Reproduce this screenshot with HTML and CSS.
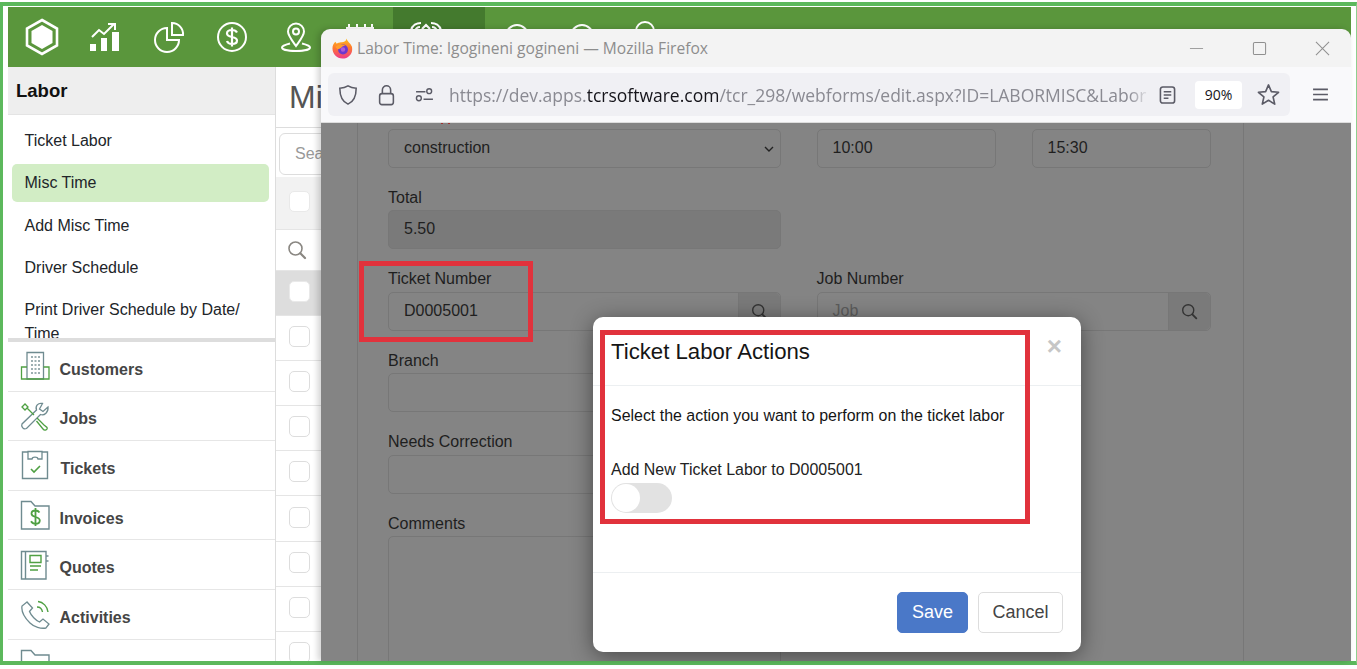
FILE: index.html
```html
<!DOCTYPE html>
<html lang="en">
<head>
<meta charset="utf-8">
<title>Labor Time</title>
<link rel="stylesheet" href="styles.css">
</head>
<body>
<svg class="defs" width="0" height="0" aria-hidden="true">
  <symbol id="mag" viewBox="0 0 20 20"><circle cx="8.500" cy="8.500" r="6.500" fill="none" stroke="currentColor" stroke-width="1.600"/><path d="M13.300 13.300 18 18" stroke="currentColor" stroke-width="2.200" stroke-linecap="round"/></symbol>
</svg>
<div class="stage">
  <div class="frame">
    <header class="topbar">
      <svg class="top-ico logo" viewBox="0 0 36 38"><path d="M18 2 33 10.500V27.500L18 36 3 27.500V10.500Z" fill="none" stroke="#fff" stroke-width="2.600"/><path d="M18 7 28.500 13V25L18 31 7.500 25V13Z" fill="#fff"/></svg>
      <svg class="top-ico" viewBox="0 0 32 32"><path d="M1 30V23H7V30ZM12 30V17H18V30ZM23 30V11H30V30Z" fill="#fff"/><path d="M3 16 10 9 15 13 25 3M19 3H26V9" fill="none" stroke="#fff" stroke-width="2"/></svg>
      <svg class="top-ico" viewBox="0 0 32 32"><path d="M14 7A12 12 0 1 0 26 19H14Z" fill="none" stroke="#fff" stroke-width="2"/><path d="M19 2A11 11 0 0 1 30 14H19Z" fill="none" stroke="#fff" stroke-width="2"/></svg>
      <svg class="top-ico" viewBox="0 0 32 32"><circle cx="16" cy="16" r="14" fill="none" stroke="#fff" stroke-width="2"/><path d="M21 11.500C20 9.500 18 9 16 9 13 9 11 10.500 11 12.500 11 17.500 21 14.500 21 19.500 21 21.800 19 23 16 23 13.500 23 11.700 22 11 20M16 6.500V25.500" fill="none" stroke="#fff" stroke-width="2.200"/></svg>
      <svg class="top-ico" viewBox="0 0 32 32"><path d="M16 25C11 18 8 14.500 8 10.500A8 8 0 0 1 24 10.500C24 14.500 21 18 16 25Z" fill="none" stroke="#fff" stroke-width="2"/><circle cx="16" cy="10.500" r="3" fill="none" stroke="#fff" stroke-width="2"/><path d="M10 22.500C4 24 2 25 2 26.500 2 28.700 8 30 16 30S30 28.700 30 26.500C30 25 28 24 22 22.500" fill="none" stroke="#fff" stroke-width="2"/></svg>
      <svg class="top-ico cal" viewBox="0 0 32 32"><path d="M2 6H30M2 14H30M5 2V30M13 2V30M21 2V30M28 2V30" fill="none" stroke="#fff" stroke-width="2"/></svg>
      <div class="top-active"><svg class="top-ico" viewBox="0 0 32 32"><path d="M1 11C2 5 7 3 11 3M5 11C6 8 8 7 10 7M21 3C25 3 30 5 31 11M22 7C24 7 26 8 27 11M12 9 16 5 20 9" fill="none" stroke="#fff" stroke-width="2.200"/></svg></div>
      <svg class="top-ico t-a" viewBox="0 0 32 32"><circle cx="16" cy="16" r="11" fill="none" stroke="#fff" stroke-width="2"/></svg>
      <svg class="top-ico t-b" viewBox="0 0 32 32"><circle cx="16" cy="16" r="11" fill="none" stroke="#fff" stroke-width="2"/></svg>
      <svg class="top-ico t-c" viewBox="0 0 32 32"><circle cx="16" cy="12" r="9" fill="none" stroke="#fff" stroke-width="2"/></svg>
    </header>
    <div class="workspace">
      <aside class="sidebar">
        <h2 class="side-title">Labor</h2>
        <nav class="side-menu">
          <a class="side-link">Ticket Labor</a>
          <a class="side-link active">Misc Time</a>
          <a class="side-link">Add Misc Time</a>
          <a class="side-link">Driver Schedule</a>
          <a class="side-link">Print Driver Schedule by Date/ Time</a>
        </nav>
        <ul class="modules">
          <li class="module">
            <svg class="mod-ico" viewBox="0 0 30 30"><path d="M7 28V1.500H23.500V28Z" fill="none" stroke="#6f8b90" stroke-width="1.300"/><path d="M7 16H1.500V28H29V16H23.500M1.500 28H29" fill="none" stroke="#4fa043" stroke-width="1.300"/><path d="M11 6H13M14.500 6H16.500M18 6H20M11 10H13M14.500 10H16.500M18 10H20M11 14H13M14.500 14H16.500M18 14H20M11 18H13M14.500 18H16.500M18 18H20M11 22H13M14.500 22H16.500M18 22H20" stroke="#7d9599" stroke-width="1.400"/></svg>
            <span class="mod-text">Customers</span>
          </li>
          <li class="module">
            <svg class="mod-ico" viewBox="0 0 30 30"><path d="M28 6 23 10.500 19.500 8 22.500 2.500C18 1.500 15 5 16.500 9L2 23C1 25 3 29 6.500 27.500L20.500 13.500C24.500 15 28.500 11 28 6Z" fill="none" stroke="#6f8b90" stroke-width="1.300"/><path d="M2 6 5 3 8 6 5 9ZM7.500 7.500 14 14M17 17 24 24 27 26.500C28 29 24.500 30 23 28L16.500 20" fill="none" stroke="#4fa043" stroke-width="1.300"/></svg>
            <span class="mod-text">Jobs</span>
          </li>
          <li class="module">
            <svg class="mod-ico" viewBox="0 0 30 30"><path d="M8 2H2.500V28.500H27.500V2H22" fill="none" stroke="#6f8b90" stroke-width="1.400"/><path d="M8 1.500H22V9H18C17.500 6.500 12.500 6.500 12 9H8Z" fill="none" stroke="#6f8b90" stroke-width="1.300"/><path d="M11 19 14 22 20 16" fill="none" stroke="#4fa043" stroke-width="1.600"/></svg>
            <span class="mod-text nudge">Tickets</span>
          </li>
          <li class="module">
            <svg class="mod-ico" viewBox="0 0 30 30"><path d="M1.500 1.500H11L15 6H29V29H1.500Z" fill="none" stroke="#6f8b90" stroke-width="1.400"/><path d="M19.500 12.500C18.500 11 17 10.500 15.500 10.500 13 10.500 11.500 12 11.500 13.800 11.500 18 19.800 16 19.800 20.500 19.800 22.500 18 23.800 15.500 23.800 13.500 23.800 12 23 11 21.300M15.500 8V26" fill="none" stroke="#4fa043" stroke-width="1.800"/></svg>
            <span class="mod-text">Invoices</span>
          </li>
          <li class="module">
            <svg class="mod-ico" viewBox="0 0 30 30"><path d="M1.500 1.500H26V29H1.500ZM5.500 1.500V29M26 6H28.500M26 11H28.500" fill="none" stroke="#6f8b90" stroke-width="1.400"/><path d="M10 5.500H21V12.500H10ZM10 16H21M10 20H18" fill="none" stroke="#4fa043" stroke-width="1.400"/></svg>
            <span class="mod-text">Quotes</span>
          </li>
          <li class="module">
            <svg class="mod-ico" viewBox="0 0 30 30"><path d="M7 3 2 7C1 13 6 20 10 24S21 30 26 29L29 25 23 20 19.500 23C16 21.500 11 16.500 9.500 12.500L12.500 9Z" fill="none" stroke="#6f8b90" stroke-width="1.300"/><path d="M17 8C20 8 22 10 22.500 13M18 2.500C23 3 27.500 7.500 28 13" fill="none" stroke="#4fa043" stroke-width="1.400"/></svg>
            <span class="mod-text">Activities</span>
          </li>
          <li class="module">
            <svg class="mod-ico" viewBox="0 0 30 30"><path d="M1.500 1.500H11L15 6H29V29H1.500Z" fill="none" stroke="#6f8b90" stroke-width="1.400"/></svg>
          </li>
        </ul>
      </aside>
      <section class="listing">
        <h1 class="list-title">Misc</h1>
        <div class="list-search"><div class="search-box">Search</div></div>
        <div class="row head"><span class="check"></span></div>
        <div class="row filter"><svg class="filter-ico"><use href="#mag"/></svg></div>
        <div class="row picked"><span class="check"></span></div>
        <div class="row"><span class="check"></span></div>
        <div class="row"><span class="check"></span></div>
        <div class="row"><span class="check"></span></div>
        <div class="row"><span class="check"></span></div>
        <div class="row"><span class="check"></span></div>
        <div class="row"><span class="check"></span></div>
        <div class="row"><span class="check"></span></div>
        <div class="row"><span class="check"></span></div>
      </section>
    </div>
  </div>

  <div class="window">
    <div class="titlebar">
      <svg class="ff" viewBox="0 0 22 22"><defs><linearGradient id="ffg" x1="0.500" y1="0" x2="0.500" y2="1"><stop offset="0" stop-color="#ffc21f"/><stop offset="0.450" stop-color="#ff7a2c"/><stop offset="1" stop-color="#ee3a8c"/></linearGradient></defs><path d="M15 0.500C16 3.500 19.500 5.500 20.800 9 22.500 15.500 17.800 21.500 11 21.500 5 21.500 0.500 16.500 0.500 11 0.500 8 1.500 6 3.500 4L5 6C7.500 4 11.500 5 13.500 3.500 14.700 2.800 15 1.500 15 0.500Z" fill="url(#ffg)"/><circle cx="11.500" cy="12" r="5.200" fill="#6d38cf"/><circle cx="11.500" cy="12" r="2.300" fill="#b05bd8"/><path d="M3.500 9.500C5.500 6.500 11 6 14 8 11.500 8 10 9 9.500 10.500L6 12Z" fill="#ff9d2b"/></svg>
      <span class="win-title">Labor Time: lgogineni gogineni — Mozilla Firefox</span>
      <div class="win-ctrls">
        <svg class="ctrl" viewBox="0 0 16 16"><path d="M1 8H15" stroke="#9a9a9a" stroke-width="1"/></svg>
        <svg class="ctrl" viewBox="0 0 16 16"><rect x="1.500" y="1.500" width="13" height="13" rx="1.500" fill="none" stroke="#8f8f8f" stroke-width="1.100"/></svg>
        <svg class="ctrl" viewBox="0 0 16 16"><path d="M1 1 15 15M15 1 1 15" stroke="#8f8f8f" stroke-width="1.100"/></svg>
      </div>
    </div>
    <div class="toolbar">
      <div class="urlbar">
        <svg class="tb-ico shield" viewBox="0 0 22 24"><path d="M11 2C8 4 5 4.500 2 4.500 2 13 4 19 11 22 18 19 20 13 20 4.500 17 4.500 14 4 11 2Z" fill="none" stroke="#5b5b66" stroke-width="1.700"/></svg>
        <svg class="tb-ico lock" viewBox="0 0 18 24"><rect x="1.500" y="10.500" width="15" height="12" rx="2.500" fill="none" stroke="#5b5b66" stroke-width="1.700"/><path d="M4.500 10.500V6.500A4.500 4.500 0 0 1 13.500 6.500V10.500" fill="none" stroke="#5b5b66" stroke-width="1.700"/></svg>
        <svg class="tb-ico sliders" viewBox="0 0 20 16"><path d="M1 5H11M9 13H19" stroke="#5b5b66" stroke-width="1.600"/><circle cx="15" cy="4.500" r="2.600" fill="none" stroke="#5b5b66" stroke-width="1.500"/><circle cx="4" cy="12" r="2.600" fill="none" stroke="#5b5b66" stroke-width="1.500"/></svg>
        <div class="url"><span class="dim">https://dev.apps.</span>tcrsoftware.com<span class="dim">/tcr_298/webforms/edit.aspx?ID=LABORMISC&amp;Labor</span></div>
        <svg class="tb-ico reader" viewBox="0 0 18 20"><rect x="1.500" y="1.500" width="15" height="17" rx="2.500" fill="none" stroke="#5b5b66" stroke-width="1.700"/><path d="M5 6.500H13M5 10H13M5 13.500H10" stroke="#5b5b66" stroke-width="1.500"/></svg>
        <span class="zoom-pill">90%</span>
        <svg class="tb-ico star" viewBox="0 0 24 24"><path d="M12 2 15 9 22.500 9.700 16.800 14.600 18.500 22 12 18 5.500 22 7.200 14.600 1.500 9.700 9 9Z" fill="none" stroke="#5b5b66" stroke-width="1.700" stroke-linejoin="round"/></svg>
      </div>
      <svg class="tb-ico burger" viewBox="0 0 18 14"><path d="M1 1.500H17M1 7H17M1 12.500H17" stroke="#5b5b66" stroke-width="1.700"/></svg>
    </div>
    <div class="page">
      <span class="cut-mark"></span>
      <div class="panel">
        <div class="form">
          <div class="field"><div class="ctl select">construction<svg class="chev" viewBox="0 0 10 6"><path d="M1 1 5 5 9 1" fill="none" stroke="#222" stroke-width="1.400"/></svg></div></div>
          <div class="field"><div class="ctl">10:00</div></div>
          <div class="field"><div class="ctl">15:30</div></div>
          <div class="field c1"><label class="lbl">Total</label><div class="ctl ro">5.50</div></div>
          <div class="field c1"><label class="lbl">Ticket Number</label><div class="ctl grp"><span class="grp-val">D0005001</span><span class="grp-btn"><svg class="grp-ico"><use href="#mag"/></svg></span></div></div>
          <div class="field c23"><label class="lbl">Job Number</label><div class="ctl grp"><span class="grp-val ph">Job</span><span class="grp-btn"><svg class="grp-ico"><use href="#mag"/></svg></span></div></div>
          <div class="field c1"><label class="lbl">Branch</label><div class="ctl"></div></div>
          <div class="field c1"><label class="lbl">Needs Correction</label><div class="ctl"></div></div>
          <div class="field c1"><label class="lbl">Comments</label><div class="ctl area"></div></div>
        </div>
      </div>
    </div>
    <div class="mark mark-ticket"></div>
    <div class="modal">
      <div class="modal-head"><h3 class="modal-title">Ticket Labor Actions</h3><span class="modal-x">×</span></div>
      <div class="modal-body">
        <p class="modal-text">Select the action you want to perform on the ticket labor</p>
        <p class="modal-sub">Add New Ticket Labor to D0005001</p>
        <span class="toggle"><span class="knob"></span></span>
      </div>
      <div class="modal-foot"><button class="btn save">Save</button><button class="btn cancel">Cancel</button></div>
      <div class="mark mark-modal"></div>
    </div>
  </div>
</div>
</body>
</html>
```
FILE: styles.css
```css
* { box-sizing: border-box; }
html, body { margin: 0; padding: 0; background: #fff; overflow: hidden; }
body { font-family: "Liberation Sans", Arial, sans-serif; color: #212529; }
.defs { position: absolute; }
.stage { position: relative; width: 1357px; height: 669px; overflow: hidden; background: #fff; }
.frame {
  margin-top: 2px; width: 1357px; height: 663px;
  border-top: 4.500px solid #5cb85c; border-bottom: 4px solid #5cb85c;
  border-left: 3px solid #5cb85c; border-right: 1px solid #8fd08f;
  padding: 1px 5px 0 5px; overflow: hidden;
  display: flex; flex-direction: column;
}

.topbar { height: 60px; flex: none; background: #5a963c; display: flex; align-items: center; padding-left: 15.500px; position: relative; }
.top-ico { width: 32px; height: 32px; flex: none; margin-right: 31.700px; }
.logo { width: 36px; height: 38px; margin-right: 29.500px; }
.cal { position: relative; top: 1px; }
.top-active { position: absolute; left: 385px; top: 0; width: 92px; height: 60px; background: #447a2e; padding: 13px 0 0 17px; }
.t-a, .t-b, .t-c { position: absolute; margin: 0; }
.t-a { left: 492.500px; top: 13px; } .t-b { left: 557.500px; top: 13px; } .t-c { left: 620.500px; top: 12px; }

.workspace { flex: 1; display: flex; min-height: 0; }
.sidebar { width: 267px; flex: none; display: flex; flex-direction: column; }
.side-title { margin: 0; height: 48px; flex: none; background: #eee; border-bottom: 1px solid #e4e4e4; font-size: 18.500px; font-weight: 700; color: #111; line-height: 48px; padding-left: 8px; }
.side-menu { height: 227px; flex: none; overflow: hidden; padding: 5px 6px 0 4px; border-bottom: 4px solid #ddd; }
.side-link { display: block; padding: 9px 12px 9px 12.500px; font-size: 16px; line-height: 24px; color: #212529; border-radius: 5px; margin-bottom: 0.300px; }
.side-link.active { background: #d2edc5; height: 38px; padding-top: 7px; margin: 2px 0 2.600px; }
.modules { list-style: none; margin: 0; padding: 0; }
.module { height: 49.600px; border-bottom: 1.500px solid #e6e6e6; display: flex; align-items: center; padding-left: 11.500px; gap: 10px; font-size: 16px; font-weight: 700; color: #454545; }
.mod-ico { width: 30px; height: 30px; flex: none; }
.mod-text { margin-top: 7px; }
.nudge { margin-left: 1px; }

.listing { flex: 1; border-left: 1px solid #ddd; overflow: hidden; min-width: 0; }
.list-title { margin: 0; height: 61px; padding-left: 13px; font-size: 32px; font-weight: 400; line-height: 60px; color: #555; white-space: nowrap; border-bottom: 1px solid #ddd; }
.list-search { height: 49px; padding: 5px 0 0 3px; }
.search-box { width: 300px; height: 42px; border: 1px solid #ddd; border-radius: 6px; padding-left: 15px; font-size: 16px; line-height: 40px; color: #999; background: #fff; }
.row { height: 45.100px; border-bottom: 1px solid #e5e5e5; display: flex; align-items: center; padding: 0 0 3px 13px; background: #fff; }
.row.head { height: 52.500px; background: #f2f2f2; }
.row.filter { height: 41.500px; padding: 0 0 0 10.500px; }
.row.picked { background: #ddd; }
.check { width: 21px; height: 21px; border: 1px solid #ddd; border-radius: 5px; background: #fff; flex: none; }
.head .check, .picked .check { border-color: #e9e9e9; }
.filter-ico { width: 20px; height: 20px; color: #8a8782; }

.window { position: absolute; left: 321px; top: 29px; width: 1030px; height: 632px; border-radius: 9px 9px 0 0; background: #f3f3f3; box-shadow: -3px 0 6px rgba(0,0,0,.18); overflow: hidden; display: flex; flex-direction: column; }
.titlebar { height: 38px; flex: none; display: flex; align-items: center; padding-left: 11px; }
.ff { width: 21px; height: 21px; flex: none; }
.win-title { margin-left: 4px; font-family: "Open Sans", "Noto Sans", sans-serif; font-size: 15.600px; color: #8d8d8d; white-space: nowrap; }
.win-ctrls { margin-left: auto; display: flex; gap: 48px; padding-right: 21px; }
.ctrl { width: 15px; height: 15px; }
.toolbar { height: 56px; flex: none; background: #f9f9fb; border-bottom: 1px solid #ddd; display: flex; align-items: flex-start; padding: 6px 0 0 7px; }
.urlbar { width: 962px; height: 43px; background: #f0f0f4; border-radius: 6px; display: flex; align-items: center; padding-left: 10px; }
.tb-ico { flex: none; }
.shield { width: 20px; height: 22px; }
.lock { width: 17px; height: 22px; margin-left: 20px; }
.sliders { width: 19px; height: 15px; margin-left: 20px; }
.url { width: 701px; margin-left: 15px; font-family: "Open Sans", "Noto Sans", sans-serif; font-size: 17.500px; color: #15141a; white-space: nowrap; overflow: hidden; -webkit-mask-image: linear-gradient(90deg, #000 97%, transparent); mask-image: linear-gradient(90deg, #000 97%, transparent); }
.dim { color: #8a8a92; }
.reader { width: 17px; height: 20px; margin-left: 9px; }
.zoom-pill { width: 47px; height: 28px; margin-left: 19px; background: #fff; border-radius: 4px; font-family: "Open Sans", "Noto Sans", sans-serif; font-size: 14px; line-height: 28px; text-align: center; color: #15141a; flex: none; }
.star { width: 23px; height: 23px; margin-left: 15px; }
.burger { width: 17px; height: 13px; margin: 15px 0 0 22px; }

.page { flex: 1; background: #848484; padding: 0 107px 0 36px; position: relative; min-height: 0; overflow: hidden; }
.cut-mark { position: absolute; left: 120px; top: -1px; width: 2px; height: 2px; background: #a03030; box-shadow: 7px 0 0 #a03030; }
.panel { height: 900px; border-left: 1px solid #777; border-right: 1px solid #777; padding: 5.500px 0 0 30px; }
.form { display: grid; grid-template-columns: 392.500px 179px 179px; column-gap: 36px; row-gap: 18px; width: 790px; }
.c1 { grid-column: 1; }
.c23 { grid-column: 2 / span 2; }
.lbl { display: block; height: 24.500px; font-size: 16px; line-height: 24px; color: #1e1e1e; }
.ctl { height: 39px; border: 1px solid #777; border-radius: 5px; padding-left: 15px; font-size: 16px; line-height: 36px; color: #1f1f1f; position: relative; }
.ro { background: #7a7a7a; }
.select { padding-right: 12px; }
.chev { position: absolute; right: 6px; top: 16px; width: 10px; height: 6px; }
.grp { display: flex; padding: 0; }
.grp-val { flex: 1; padding-left: 15px; }
.ph { color: #5c5c5c; }
.grp-btn { width: 42px; flex: none; background: #7a7a7a; border-left: 1px solid #777; border-radius: 0 5px 5px 0; display: flex; align-items: center; justify-content: center; }
.grp-ico { width: 17px; height: 17px; color: #333; }
.area { height: 200px; }

.mark { position: absolute; border: 5px solid #e1323c; pointer-events: none; }
.mark-ticket { left: 38px; top: 232px; width: 174px; height: 81px; }
.modal { position: absolute; left: 272px; top: 288px; width: 488px; height: 335px; background: #fff; border-radius: 10px; box-shadow: 0 4px 22px rgba(0,0,0,.45); display: flex; flex-direction: column; }
.modal-head { height: 69px; flex: none; border-bottom: 1px solid #eceff1; padding: 20px 18px 0; display: flex; justify-content: space-between; }
.modal-title { margin: 0; font-size: 22.200px; font-weight: 400; line-height: 30px; color: #151515; }
.modal-x { font-size: 26px; font-weight: 700; line-height: 20px; margin-top: -1px; color: #c6c6c6; margin-right: 1px; }
.modal-body { height: 187px; flex: none; border-bottom: 1px solid #eceff1; padding: 18px; }
.modal-text { margin: 0; font-size: 15.950px; line-height: 24px; color: #151515; }
.modal-sub { margin: 30px 0 0; font-size: 15.950px; line-height: 24px; color: #222; }
.toggle { display: block; width: 61px; height: 30px; margin-top: 1px; border-radius: 15px; background: #e2e2e2; padding: 1px; }
.knob { display: block; width: 28px; height: 28px; border-radius: 50%; background: #fff; }
.modal-foot { flex: 1; display: flex; justify-content: flex-end; gap: 10px; padding: 19px 18px 0 0; }
.btn { height: 41px; border-radius: 5px; font-family: inherit; font-size: 18px; padding: 0; }
.save { width: 71px; background: #4a78c8; border: 1px solid #4a78c8; color: #fff; }
.cancel { width: 85px; background: #fff; border: 1px solid #ddd; color: #444; }
.mark-modal { left: 7px; top: 13px; width: 430px; height: 194px; }
```
